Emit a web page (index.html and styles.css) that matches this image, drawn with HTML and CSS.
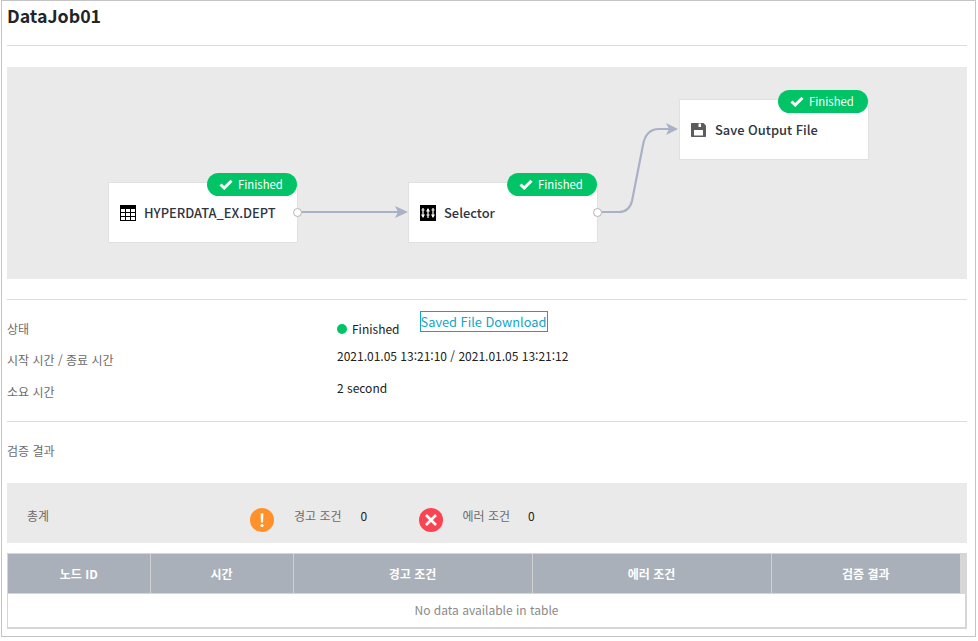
FILE: index.html
```html
<!DOCTYPE html>
<html lang="ko">
<head>
    <meta charset="UTF-8">
    <title>DataJob01</title>
    <link rel="stylesheet" href="styles.css">
</head>
<body>
    <div class="frame">
        <h1 class="title">DataJob01</h1>
        <hr class="rule rule-title">

        <div class="canvas">
            <svg class="edges" width="960" height="211" viewBox="0 0 960 211">
                <g fill="none" stroke="#a9b1c6" stroke-width="2.200">
                    <path d="M291 145H392"/>
                    <path d="M591 145H612C619 145 623 142 625 134L636 78C638 67 643 62 652 62H664"/>
                </g>
                <path d="M388 139L401 145L388 151L391 145Z" fill="#a9b1c6"/>
                <path d="M659 56L671 62L659 68L662 62Z" fill="#a9b1c6"/>
            </svg>

            <div class="node node-source">
                <span class="badge">
                    <svg class="check" width="14" height="11" viewBox="0 0 14 11"><path d="M1.5 5.5L5.2 9L12.5 1.8" fill="none" stroke="#fff" stroke-width="3"/></svg>
                    Finished
                </span>
                <svg class="node-icon" width="16" height="16" viewBox="0 0 16 16">
                    <path d="M0 0H16V16H0Z" fill="#000"/>
                    <path d="M1 4H5V7H1ZM6 4H10V7H6ZM11 4H15V7H11ZM1 8H5V11H1ZM6 8H10V11H6ZM11 8H15V11H11ZM1 12H5V15H1ZM6 12H10V15H6ZM11 12H15V15H11Z" fill="#fff"/>
                </svg>
                <span class="node-name">HYPERDATA_EX.DEPT</span>
                <i class="port"></i>
            </div>

            <div class="node node-selector">
                <span class="badge">
                    <svg class="check" width="14" height="11" viewBox="0 0 14 11"><path d="M1.5 5.5L5.2 9L12.5 1.8" fill="none" stroke="#fff" stroke-width="3"/></svg>
                    Finished
                </span>
                <svg class="node-icon" width="16" height="16" viewBox="0 0 16 16">
                    <path d="M0 0H16V16H0Z" fill="#000"/>
                    <path d="M3 3V12M8 4V13M13 3V12M1.500 5H4.500M6.500 10H9.500M11.500 5H14.500" stroke="#fff" stroke-width="1.200" fill="none"/>
                    <path d="M1 9.500H5L3 13ZM6 6.500H10L8 3ZM11 9.500H15L13 13Z" fill="#fff"/>
                </svg>
                <span class="node-name">Selector</span>
                <i class="port"></i>
            </div>

            <div class="node node-save">
                <span class="badge">
                    <svg class="check" width="14" height="11" viewBox="0 0 14 11"><path d="M1.5 5.5L5.2 9L12.5 1.8" fill="none" stroke="#fff" stroke-width="3"/></svg>
                    Finished
                </span>
                <svg class="node-icon" width="16" height="16" viewBox="0 0 16 16">
                    <path d="M1 1H12.500L15 3.500V14C15 14.600 14.600 15 14 15H1C.400 15 0 14.600 0 14V2C0 1.400 .400 1 1 1Z" fill="#5c5c5c"/>
                    <path d="M7.500 1.500H10V5H7.500Z" fill="#fff"/>
                    <path d="M3 8H12V13.500H3Z" fill="#fff"/>
                </svg>
                <span class="node-name">Save Output File</span>
            </div>
        </div>

        <hr class="rule rule-canvas">

        <div class="info">
            <div class="info-row row-status">
                <span class="info-label">상태</span>
                <span class="info-value status"><i class="dot"></i>Finished</span>
                <a class="download" href="#">Saved File Download</a>
            </div>
            <div class="info-row row-time">
                <span class="info-label">시작 시간 / 종료 시간</span>
                <span class="info-value">2021.01.05 13:21:10 / 2021.01.05 13:21:12</span>
            </div>
            <div class="info-row row-took">
                <span class="info-label">소요 시간</span>
                <span class="info-value">2 second</span>
            </div>
        </div>

        <hr class="rule rule-info">

        <div class="section-label">검증 결과</div>

        <div class="summary">
            <span class="summary-title">총계</span>
            <svg class="summary-icon icon-warn" width="24" height="24" viewBox="0 0 24 24">
                <circle cx="12" cy="12" r="12" fill="#ff912c"/>
                <path d="M10.600 5.500H13.400L13 14.500H11Z" fill="#fff"/>
                <circle cx="12" cy="17.500" r="1.600" fill="#fff"/>
            </svg>
            <span class="summary-name name-warn">경고 조건</span>
            <span class="summary-count count-warn">0</span>
            <svg class="summary-icon icon-error" width="24" height="24" viewBox="0 0 24 24">
                <circle cx="12" cy="12" r="12" fill="#fa4451"/>
                <path d="M7 7L17 17M17 7L7 17" stroke="#fff" stroke-width="2.600"/>
            </svg>
            <span class="summary-name name-error">에러 조건</span>
            <span class="summary-count count-error">0</span>
        </div>

        <div class="table-wrap">
            <div class="table-head">
                <table class="result-table">
                    <colgroup>
                        <col class="col-node"><col class="col-time"><col class="col-cond"><col class="col-cond"><col class="col-result">
                    </colgroup>
                    <thead>
                        <tr>
                            <th>노드 ID</th>
                            <th>시간</th>
                            <th>경고 조건</th>
                            <th>에러 조건</th>
                            <th>검증 결과</th>
                        </tr>
                    </thead>
                </table>
            </div>
            <div class="table-empty">No data available in table</div>
        </div>
    </div>
</body>
</html>
```

FILE: styles.css
```css
body {
    margin: 0;
    background-color: #fff;
    color: #212121;
    font-family: "Noto Sans CJK KR", "Noto Sans", sans-serif;
    font-size: 13px;
}

.frame {
    box-sizing: border-box;
    width: 975px;
    height: 637px;
    margin-left: 1px;
    padding: 0 8px 0 5px;
    border: 1px solid #c4c4c4;
    overflow: hidden;
}

.title {
    margin: 0;
    height: 44px;
    font-size: 17.800px;
    line-height: 29px;
    font-weight: 700;
    color: #212529;
}

.rule {
    margin: 0;
    border: none;
    border-top: 1px solid #dcdcdc;
}

.rule-canvas {
    margin-top: 20px;
}

.rule-info {
    margin-top: 0;
}

/* diagram */
.canvas {
    position: relative;
    height: 212px;
    margin-top: 21px;
    background-color: #eaeaea;
}

.edges {
    position: absolute;
    left: 0;
    top: 0;
}

.node {
    position: absolute;
    box-sizing: border-box;
    display: flex;
    align-items: center;
    width: 190px;
    height: 61px;
    padding-left: 11px;
    gap: 8px;
    background-color: #fff;
    border: 1px solid #e0e0e0;
    font-size: 12.900px;
    font-weight: 500;
    color: #2f3542;
}

.node-source {
    left: 101px;
    top: 115px;
}

.node-selector {
    left: 401px;
    top: 115px;
}

.node-save {
    left: 672px;
    top: 32px;
}

.node-icon {
    flex: none;
}

.badge {
    position: absolute;
    right: 0;
    top: -10px;
    display: flex;
    align-items: center;
    gap: 5px;
    box-sizing: border-box;
    width: 90px;
    height: 23px;
    padding-left: 12px;
    padding-bottom: 2px;
    border-radius: 12px;
    background-color: #00c466;
    color: #fff;
    font-size: 11.300px;
    font-weight: 400;
}

.check {
    margin-top: 2px;
}

.port {
    position: absolute;
    right: -5px;
    top: 25px;
    box-sizing: border-box;
    width: 9px;
    height: 9px;
    border: 1px solid #b5b5b5;
    border-radius: 50%;
    background-color: #fff;
}

/* job info */
.info {
    height: 121px;
    position: relative;
}

.info-row {
    display: flex;
    height: 32px;
}

.row-status {
    padding-top: 13px;
    height: 31px;
}

.info-label {
    width: 330px;
    line-height: 32px;
    color: #6b6b6b;
    font-size: 12px;
}

.info-value {
    font-size: 12px;
    line-height: 24px;
    color: #212121;
}

.status {
    display: flex;
    align-items: center;
    height: 32px;
}

.dot {
    width: 10px;
    height: 10px;
    margin-right: 5px;
    border-radius: 50%;
    background-color: #00c466;
}

.download {
    box-sizing: border-box;
    height: 21px;
    margin-top: -2px;
    margin-left: 20px;
    width: 128px;
    border: 1px solid #12a5c6;
    color: #12a5c6;
    font-size: 12.800px;
    line-height: 19px;
    white-space: nowrap;
    text-decoration: none;
}

.section-label {
    height: 61px;
    line-height: 58px;
    font-size: 12px;
    color: #6b6b6b;
}

/* summary band */
.summary {
    display: flex;
    align-items: center;
    height: 60px;
    background-color: #eaeaea;
    font-size: 12px;
}

.summary-title {
    width: 223px;
    padding-left: 20px;
    color: #6b6b6b;
    box-sizing: border-box;
    margin-top: 4px;
}

.summary-icon {
    flex: none;
    margin-top: 13px;
    margin-left: 20px;
}

.icon-error {
    margin-left: 0;
}

.summary-name {
    margin-top: 4px;
    color: #6b6b6b;
}

.name-warn {
    margin-left: 20px;
}

.name-error {
    margin-left: 20px;
}

.summary-count {
    margin-top: 4px;
    color: #212121;
}

.count-warn {
    width: 58px;
    margin-left: 19px;
}

.count-error {
    margin-left: 18px;
}

/* table */
.table-wrap {
    box-sizing: border-box;
    height: 76px;
    margin-top: 10px;
    border: 1px solid #d6d6d6;
    border-bottom-width: 2px;
    border-right-width: 2px;
}

.table-head {
    background-color: #d6d6d6;
    padding-right: 5px;
}

.result-table {
    width: 952px;
    table-layout: fixed;
    border-collapse: collapse;
}

.col-node {
    width: 142px;
}

.col-time {
    width: 143px;
}

.col-cond {
    width: 239px;
}

.result-table th {
    height: 39px;
    padding: 0;
    border-right: 1px solid #d0d0d0;
    border-bottom: 1px solid #d6d6d6;
    background-color: #a9b0b9;
    color: #fff;
    font-size: 12px;
    font-weight: 700;
    text-align: center;
}

.result-table th:last-child {
    border-right: none;
}

.table-empty {
    height: 33px;
    line-height: 31px;
    text-align: center;
    color: #8a8a8a;
    font-size: 12px;
}
```
